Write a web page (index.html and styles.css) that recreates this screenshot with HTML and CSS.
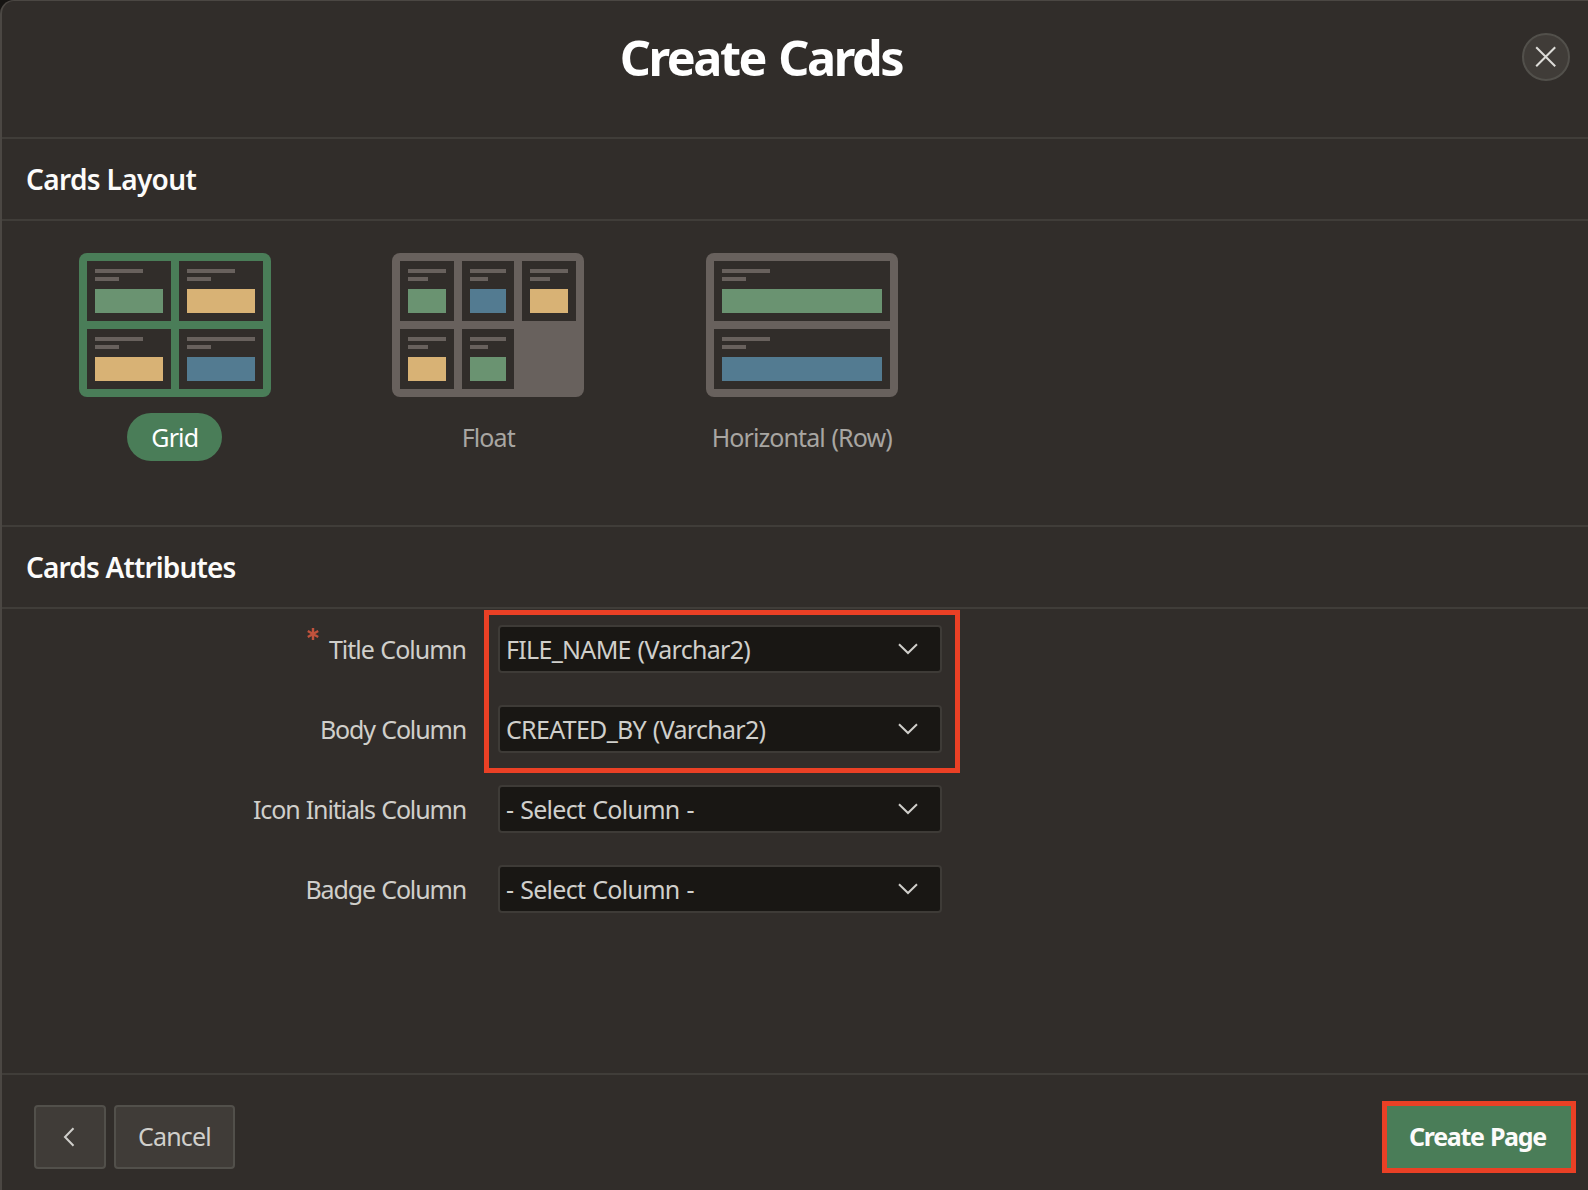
FILE: index.html
```html
<!DOCTYPE html>
<html lang="en">
<head>
<meta charset="utf-8">
<title>Create Cards</title>
<link rel="stylesheet" href="styles.css">
</head>
<body>
<div class="dialog">
  <header class="header">
    <h1 class="title">Create Cards</h1>
    <button class="close" aria-label="Close"><svg width="24" height="24" viewBox="0 0 24 24"><path d="M2.2 2.2l19 19M21.2 2.2l-19 19"/></svg></button>
  </header>
  <h2 class="section">Cards Layout</h2>
  <div class="layouts">
    <div class="option selected">
      <div class="thumb thumb-grid">
        <div class="cell"><i></i><i></i><b class="green"></b></div>
        <div class="cell"><i></i><i></i><b class="yellow"></b></div>
        <div class="cell"><i></i><i></i><b class="yellow"></b></div>
        <div class="cell wide"><i></i><i></i><b class="blue"></b></div>
      </div>
      <span class="name">Grid</span>
    </div>
    <div class="option">
      <div class="thumb thumb-float">
        <div class="cell"><i></i><i></i><b class="green"></b></div>
        <div class="cell"><i></i><i></i><b class="blue"></b></div>
        <div class="cell"><i></i><i></i><b class="yellow"></b></div>
        <div class="cell"><i></i><i></i><b class="yellow"></b></div>
        <div class="cell"><i></i><i></i><b class="green"></b></div>
      </div>
      <span class="name">Float</span>
    </div>
    <div class="option">
      <div class="thumb thumb-row">
        <div class="cell"><i></i><i></i><b class="green"></b></div>
        <div class="cell"><i></i><i></i><b class="blue"></b></div>
      </div>
      <span class="name">Horizontal (Row)</span>
    </div>
  </div>
  <h2 class="section section-attributes">Cards Attributes</h2>
  <div class="fields">
    <div class="highlight"></div>
    <div class="field field-title"><label class="label"><svg class="required" width="12" height="12" viewBox="0 0 12 12"><path d="M6 0v12M.8 3l10.4 6M11.2 3L.8 9"/></svg>Title Column</label><div class="select">FILE_NAME (Varchar2)<svg width="20" height="12" viewBox="0 0 20 12"><path d="M1 1.3l9 8.7 9-8.7"/></svg></div></div>
    <div class="field"><label class="label">Body Column</label><div class="select">CREATED_BY (Varchar2)<svg width="20" height="12" viewBox="0 0 20 12"><path d="M1 1.3l9 8.7 9-8.7"/></svg></div></div>
    <div class="field"><label class="label">Icon Initials Column</label><div class="select">- Select Column -<svg width="20" height="12" viewBox="0 0 20 12"><path d="M1 1.3l9 8.7 9-8.7"/></svg></div></div>
    <div class="field"><label class="label">Badge Column</label><div class="select">- Select Column -<svg width="20" height="12" viewBox="0 0 20 12"><path d="M1 1.3l9 8.7 9-8.7"/></svg></div></div>
  </div>
  <footer class="footer">
    <button class="btn back" aria-label="Back"><svg width="12" height="20" viewBox="0 0 12 20"><path d="M10.5 1.3L2 10l8.5 8.7"/></svg></button>
    <button class="btn cancel">Cancel</button>
    <button class="btn create">Create Page</button>
  </footer>
</div>
</body>
</html>
```

FILE: styles.css
```css
* { box-sizing: border-box; }

body {
  margin: 0;
  background: #161412;
  font-family: "Noto Sans", "Open Sans", sans-serif;
  font-size: 25px;
  color: #d0cfcb;
}

.dialog {
  display: flex;
  flex-direction: column;
  width: 1588px;
  height: 1190px;
  overflow: hidden;
  background: #312d2a;
  border-top: 1px solid #4b4743;
  border-left: 2px solid #4b4743;
  border-top-left-radius: 14px;
}

svg { display: block; fill: none; stroke: currentColor; stroke-width: 2; }
button { font: inherit; color: inherit; padding: 0; }

.header {
  display: flex;
  height: 136px;
  padding: 32px 18px 0 0;
}

.title {
  flex: 1;
  margin: 0;
  padding-right: 2px;
  font-size: 48.5px;
  line-height: 49px;
  font-weight: 700;
  letter-spacing: -2.4px;
  word-spacing: 3px;
  text-align: center;
  color: #fff;
}

.close {
  display: flex;
  align-items: center;
  justify-content: center;
  width: 48px;
  height: 48px;
  border: 2px solid #52504b;
  border-radius: 50%;
  background: #403c38;
  color: #dddcd8;
}

.section {
  flex: none;
  height: 84px;
  margin: 0;
  padding-left: 24px;
  border: solid #403d39;
  border-width: 2px 0;
  font-size: 28px;
  line-height: 81px;
  font-weight: 600;
  letter-spacing: -0.65px;
  color: #fcfbfa;
}

.section-attributes { letter-spacing: -0.84px; }

.layouts {
  display: grid;
  grid-template-columns: repeat(3, 313.5px);
  height: 304px;
  padding: 32px 16px 0;
}

.option {
  display: flex;
  flex-direction: column;
  align-items: center;
  gap: 16px;
}

.thumb {
  display: grid;
  grid-auto-rows: 60px;
  gap: 8px;
  width: 192px;
  height: 144px;
  padding: 8px;
  border-radius: 8px;
  background: #68615d;
}

.selected .thumb { background: #4a7d58; }
.thumb-grid { grid-template-columns: 84px 84px; }
.thumb-float { grid-template-columns: 54px 52px 54px; }
.thumb-row { grid-template-columns: 176px; }

.cell {
  display: flex;
  flex-direction: column;
  gap: 4px;
  padding: 8px;
  background: #312d2a;
}

.cell i { width: 48px; height: 4px; background: #68615d; }
.cell i + i { width: 24px; margin-bottom: 4px; }
.cell.wide i:first-child, .thumb-float .cell i:first-child { width: 100%; }
.thumb-float .cell i + i { width: 20px; }
.thumb-float .cell:nth-child(3n + 2) i + i { width: 18px; }
.cell b { height: 24px; }
.green { background: #6a9371; }
.yellow { background: #d8b275; }
.blue { background: #537b91; }

.name {
  height: 48px;
  padding: 0 24px;
  border-radius: 24px;
  line-height: 48px;
  letter-spacing: -0.9px;
  word-spacing: 1px;
  color: #a8a6a2;
}

.selected .name {
  padding: 0 24px;
  background: #4a7d58;
  color: #fff;
}

.fields {
  position: relative;
  display: flex;
  flex: 1;
  flex-direction: column;
  gap: 32px;
  padding-top: 16px;
}

.highlight {
  position: absolute;
  left: 482px;
  top: 1px;
  width: 476px;
  height: 163px;
  border: 5px solid #ea4025;
}

.field { display: flex; gap: 32px; }

.label {
  display: flex;
  justify-content: flex-end;
  gap: 10px;
  width: 464px;
  line-height: 48px;
  letter-spacing: -1.15px;
  word-spacing: 1px;
}

.field-title .label { letter-spacing: -1px; }

.required { margin-top: 3px; color: #c0523c; stroke-width: 2.4; }

.select {
  display: flex;
  align-items: center;
  justify-content: space-between;
  width: 444px;
  height: 48px;
  padding: 0 22px 1px 6px;
  border: 2px solid #3e3b37;
  border-radius: 4px;
  background: #191714;
  letter-spacing: -0.7px;
  word-spacing: 1px;
}

.footer {
  display: flex;
  flex: none;
  gap: 8px;
  height: 117px;
  padding: 30px 12px 0 32px;
  border-top: 2px solid #403d39;
}

.btn {
  display: flex;
  align-items: center;
  justify-content: center;
  height: 64px;
  padding-bottom: 2px;
  border: 2px solid #52504b;
  border-radius: 4px;
  background: #403c38;
  letter-spacing: -0.8px;
}

.back { width: 72px; padding: 0 2px 0 0; }
.cancel { width: 121px; }

.create {
  width: 194px;
  height: 72px;
  margin: -4px 0 0 auto;
  padding: 0 3px 2px 0;
  border: 5px solid #ea4025;
  border-radius: 0;
  background: #4a7d58;
  font-weight: 700;
  letter-spacing: -1.3px;
  word-spacing: 1px;
  color: #fcfbfa;
}
```
